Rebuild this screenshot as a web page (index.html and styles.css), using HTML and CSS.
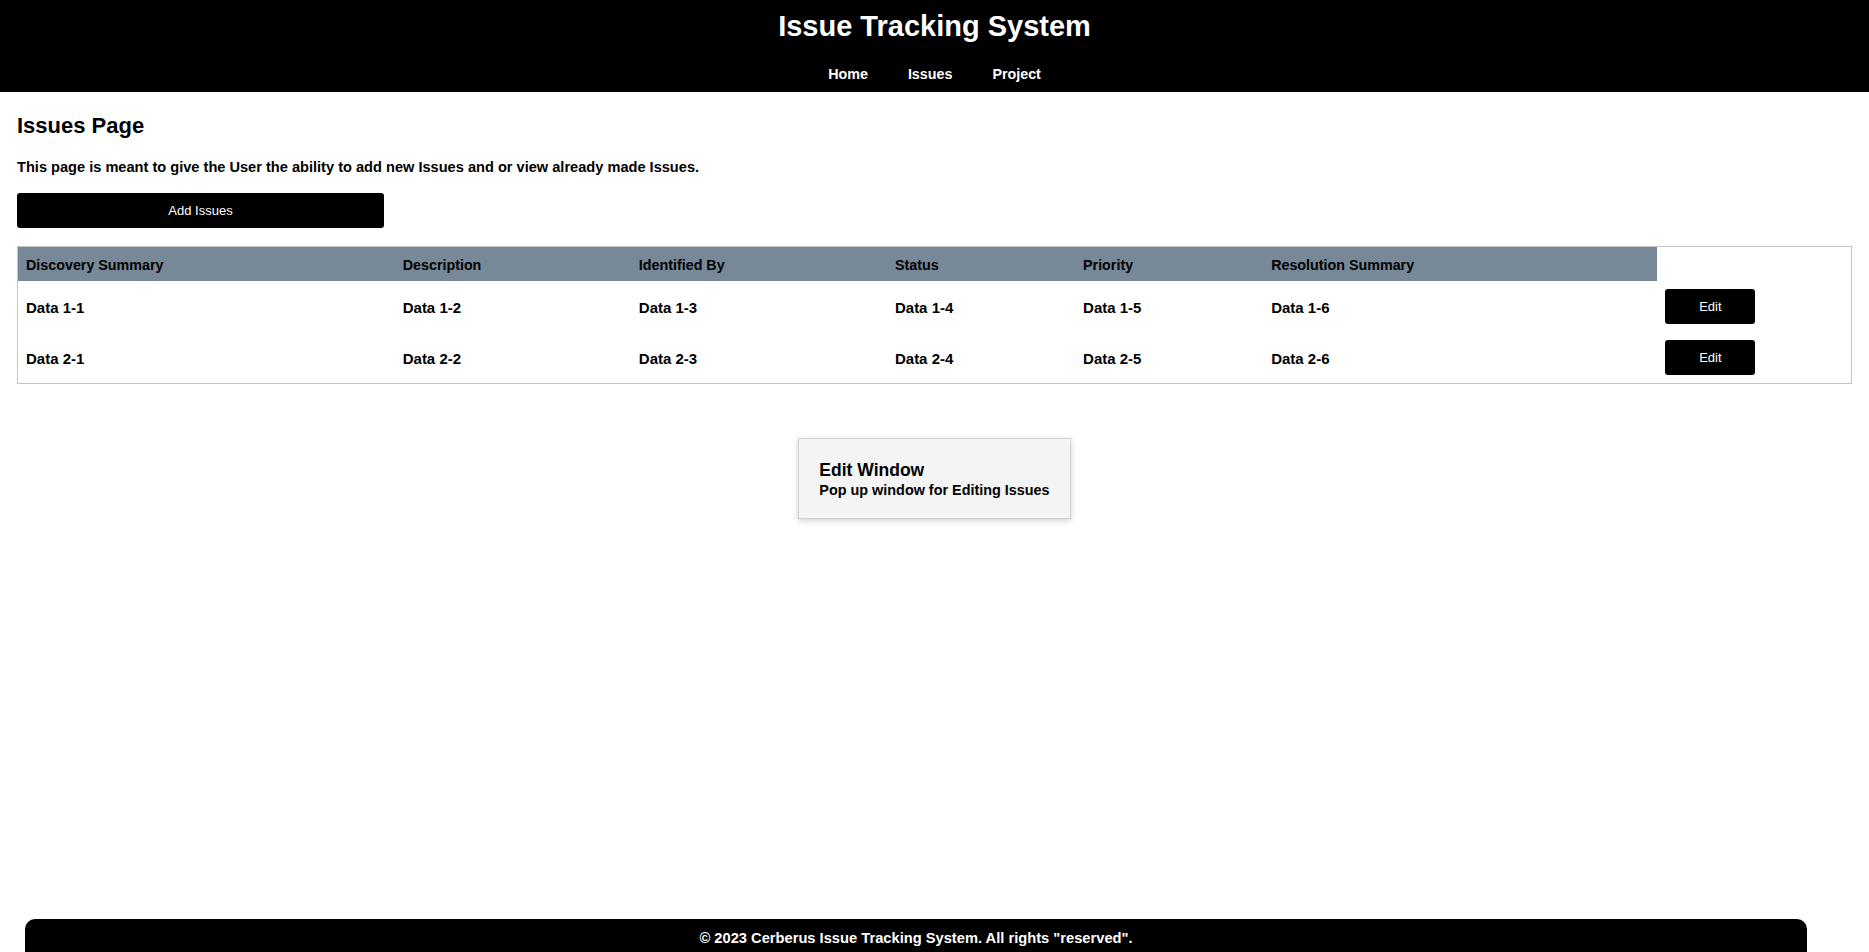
FILE: index.html
```html
<!DOCTYPE html>
<html lang="en">
<head>
<meta charset="utf-8">
<title>Issues Page</title>
<link rel="stylesheet" href="styles.css">
</head>
<body>
<div class="page">
  <header class="site-header">
    <h1 class="site-title">Issue Tracking System</h1>
    <nav class="nav">
      <a href="#" class="nav-link">Home</a>
      <a href="#" class="nav-link">Issues</a>
      <a href="#" class="nav-link">Project</a>
    </nav>
  </header>

  <main class="main">
    <h2 class="page-title">Issues Page</h2>
    <p class="intro">This page is meant to give the User the ability to add new Issues and or view already made Issues.</p>
    <button class="btn btn-add">Add Issues</button>

    <table class="issues">
      <colgroup>
        <col class="c1"><col class="c2"><col class="c3"><col class="c4"><col class="c5"><col class="c6"><col class="c7">
      </colgroup>
      <thead>
        <tr>
          <th>Discovery Summary</th>
          <th>Description</th>
          <th>Identified By</th>
          <th>Status</th>
          <th>Priority</th>
          <th>Resolution Summary</th>
          <th class="th-empty"></th>
        </tr>
      </thead>
      <tbody>
        <tr>
          <td>Data 1-1</td><td>Data 1-2</td><td>Data 1-3</td><td>Data 1-4</td><td>Data 1-5</td><td>Data 1-6</td>
          <td class="td-action"><button class="btn btn-edit">Edit</button></td>
        </tr>
        <tr>
          <td>Data 2-1</td><td>Data 2-2</td><td>Data 2-3</td><td>Data 2-4</td><td>Data 2-5</td><td>Data 2-6</td>
          <td class="td-action"><button class="btn btn-edit">Edit</button></td>
        </tr>
      </tbody>
    </table>

    <div class="popup-wrap">
      <div class="popup">
        <div class="popup-title">Edit Window</div>
        <div class="popup-text">Pop up window for Editing Issues</div>
      </div>
    </div>
  </main>

  <footer class="footer">© 2023 Cerberus Issue Tracking System. All rights "reserved".</footer>
</div>
</body>
</html>
```

FILE: styles.css
```css
* { box-sizing: border-box; }

html, body {
  margin: 0;
  padding: 0;
  background: #ffffff;
}

body {
  font-family: "Liberation Sans", Arial, sans-serif;
  font-weight: bold;
  color: #000;
  overflow: hidden;
}

.page {
  min-height: 100vh;
  display: flex;
  flex-direction: column;
}

.site-header {
  background: #000;
  color: #fff;
  text-align: center;
  padding: 10px 0 10px;
}

.site-title {
  margin: 0;
  font-size: 29px;
  line-height: 33px;
  font-weight: bold;
}

.nav {
  margin-top: 23px;
  display: flex;
  justify-content: center;
  gap: 40px;
  font-size: 14.3px;
  line-height: 16px;
}

.nav-link {
  color: #fff;
  text-decoration: none;
}

.main {
  padding: 0 17px;
}

.page-title {
  margin: 21px 0 0;
  font-size: 22px;
  line-height: 25px;
}

.intro {
  margin: 21px 0 0;
  font-size: 14.6px;
  line-height: 16px;
}

.btn {
  background: #000;
  color: #fff;
  border: none;
  border-radius: 3px;
  font-family: "Liberation Sans", Arial, sans-serif;
  font-weight: normal;
  font-size: 13px;
  cursor: pointer;
}

.btn-add {
  display: block;
  margin-top: 18px;
  width: 367px;
  height: 35px;
}

.issues {
  margin-top: 18px;
  width: 100%;
  border-collapse: collapse;
  table-layout: fixed;
  border: 1px solid #c4c4c4;
  font-size: 15px;
}

.c1 { width: 377px; }
.c2 { width: 236px; }
.c3 { width: 256px; }
.c4 { width: 188px; }
.c5 { width: 188px; }
.c6 { width: 394px; }
.c7 { width: 194px; }

.issues th {
  background: #778899;
  text-align: left;
  padding: 10px 8px 8px;
  line-height: 16px;
  font-size: 14.3px;
  font-weight: bold;
}

.issues th.th-empty {
  background: transparent;
}

.issues td {
  padding: 9px 8px 7px;
  line-height: 16px;
  vertical-align: middle;
}

.issues td.td-action {
  padding: 8px;
}

.btn-edit {
  width: 90px;
  height: 35px;
  display: block;
}

.popup-wrap {
  display: flex;
  justify-content: center;
  margin-top: 54px;
}

.popup {
  background: #f4f4f4;
  border: 1px solid #d0d0d0;
  box-shadow: 0 2px 6px rgba(0, 0, 0, 0.18);
  padding: 19px 20px 19px;
}

.popup-title {
  font-size: 17.5px;
  line-height: 20px;
  padding-top: 2px;
}

.popup-text {
  font-size: 14.4px;
  line-height: 18px;
  padding-top: 1px;
}

.footer {
  margin: auto 62px -5px 25px;
  background: #000;
  color: #fff;
  border-radius: 10px 10px 0 0;
  text-align: center;
  font-size: 14.7px;
  line-height: 16px;
  padding: 11px 0 11px;
}
```
